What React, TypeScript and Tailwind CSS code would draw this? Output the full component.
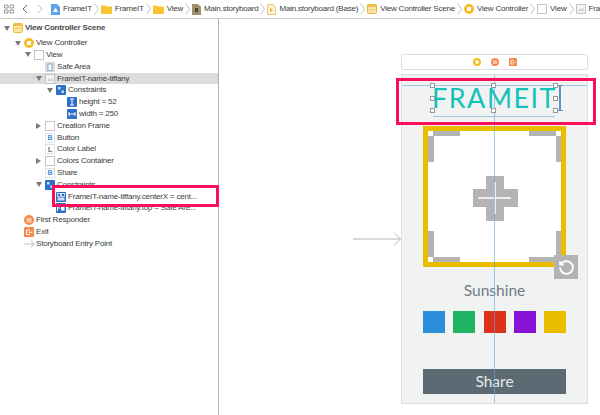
import React from "react";

const Chev = () => (
  <svg width="5" height="12" viewBox="0 0 5 12" className="shrink-0"><path d="M0.5 0.5L4.5 6L0.5 11.5" fill="none" stroke="#b5b5b5" strokeWidth="0.8" /></svg>
);
const Folder = () => (
  <svg width="11" height="9" viewBox="0 0 11 9" className="shrink-0"><path d="M0 1.2Q0 .4 .8 .4H4L5 1.5H10.2Q11 1.5 11 2.2V8.2Q11 9 10.2 9H.8Q0 9 0 8.2Z" fill="#f8c42f" /></svg>
);
const SceneIcon = () => (
  <svg width="10" height="10" viewBox="0 0 10 10" className="shrink-0"><rect x=".5" y=".5" width="9" height="9" rx="1" fill="#fbe6a6" stroke="#eab73a" /><rect x=".5" y=".5" width="9" height="2.5" fill="#f2c04a" /><rect x="2" y="5" width="6" height="1" fill="#f3ca6b" /></svg>
);
const VCIcon = ({ s = 10 }: { s?: number }) => (
  <svg width={s} height={s} viewBox="0 0 10 10" className="shrink-0"><circle cx="5" cy="5" r="5" fill="#f8bb24" /><rect x="3" y="3" width="4" height="4" fill="#fff" /></svg>
);
const ViewIcon = () => (
  <svg width="10" height="10" viewBox="0 0 10 10" className="shrink-0"><rect x=".5" y=".5" width="9" height="9" fill="#fff" stroke="#c4c4c4" /></svg>
);
const ImgIcon = () => (
  <svg width="10" height="10" viewBox="0 0 10 10" className="shrink-0"><rect x=".5" y=".5" width="9" height="9" fill="#f3f3f3" stroke="#c4c4c4" /><path d="M2 7L4 4.5L5.5 6L7 3.5L8 7Z" fill="#cfcfcf" /></svg>
);
const SafeIcon = () => (
  <svg width="10" height="10" viewBox="0 0 10 10" className="shrink-0"><rect width="10" height="10" fill="#d8dbde" /><rect x="3" y="2" width="4" height="6.5" fill="#fff" stroke="#5b93cf" strokeWidth=".7" /></svg>
);
const LetterIcon = ({ c, color }: { c: string; color: string }) => (
  <span className="flex h-[10px] w-[10px] shrink-0 items-center justify-center border border-[#e2e2e2] bg-white text-[7px] font-bold leading-none" style={{ color }}>{c}</span>
);
const Constraint = ({ kind }: { kind: "group" | "h" | "w" | "cx" | "top" }) => (
  <svg width="10" height="10" viewBox="0 0 10 10" className="shrink-0">
    <rect width="10" height="10" rx="1" fill="#2d6fc9" />
    {kind === "group" && <><rect x="2" y="2" width="2.5" height="2.5" fill="#cfe0f6" /><rect x="5.5" y="5.5" width="2.5" height="2.5" fill="#cfe0f6" /></>}
    {kind === "h" && <path d="M3 2H7M5 2V8M3 8H7" stroke="#fff" strokeWidth="1" fill="none" />}
    {kind === "w" && <path d="M2 3V7M2 5H8M8 3V7" stroke="#fff" strokeWidth="1" fill="none" />}
    {kind === "cx" && <><rect x="1.5" y="1.5" width="3" height="3" fill="none" stroke="#fff" strokeWidth=".7" /><rect x="5.5" y="1.5" width="3" height="3" fill="none" stroke="#fff" strokeWidth=".7" /><rect x="1.5" y="5.5" width="7" height="3" fill="#cfe0f6" /></>}
    {kind === "top" && <><path d="M1.5 2V8M1.5 5H4" stroke="#fff" strokeWidth="1" /><rect x="5" y="2.5" width="3.5" height="5" fill="#fff" /></>}
  </svg>
);
const Responder = ({ s = 10 }: { s?: number }) => (
  <svg width={s} height={s} viewBox="0 0 10 10" className="shrink-0"><circle cx="5" cy="5" r="5" fill="#f58a4b" /><rect x="2.5" y="3" width="5" height="4.5" fill="#fbc7a6" /></svg>
);
const ExitIcon = ({ s = 10 }: { s?: number }) => (
  <svg width={s} height={s} viewBox="0 0 10 10" className="shrink-0"><rect width="10" height="10" rx="1" fill="#f58a4b" /><path d="M6 3H2.5V7.5H6M4.5 5.2H8.5" stroke="#fff" strokeWidth="1" fill="none" /></svg>
);
const EntryIcon = () => (
  <svg width="11" height="8" viewBox="0 0 11 8" className="shrink-0"><path d="M0 4H10M7 .8L10.4 4L7 7.2" stroke="#b0b0b0" strokeWidth=".8" fill="none" /></svg>
);

type Row = { pad: string; tri?: "d" | "r"; icon: React.ReactNode; label: string; selected?: boolean; bold?: boolean };
const rows: Row[] = [
  { pad: "pl-[4px] mb-[3px]", tri: "d", icon: <SceneIcon />, label: "View Controller Scene", bold: true },
  { pad: "pl-[15px]", tri: "d", icon: <VCIcon />, label: "View Controller" },
  { pad: "pl-[25px]", tri: "d", icon: <ViewIcon />, label: "View" },
  { pad: "pl-[36px]", icon: <SafeIcon />, label: "Safe Area" },
  { pad: "pl-[36px]", tri: "d", icon: <ImgIcon />, label: "FrameIT-name-tiffany", selected: true },
  { pad: "pl-[47px]", tri: "d", icon: <Constraint kind="group" />, label: "Constraints" },
  { pad: "pl-[58px]", icon: <Constraint kind="h" />, label: "height = 52" },
  { pad: "pl-[58px]", icon: <Constraint kind="w" />, label: "width = 250" },
  { pad: "pl-[36px]", tri: "r", icon: <ViewIcon />, label: "Creation Frame" },
  { pad: "pl-[36px]", icon: <LetterIcon c="B" color="#4a90d9" />, label: "Button" },
  { pad: "pl-[36px]", icon: <LetterIcon c="L" color="#666666" />, label: "Color Label" },
  { pad: "pl-[36px]", tri: "r", icon: <ViewIcon />, label: "Colors Container" },
  { pad: "pl-[36px]", icon: <LetterIcon c="B" color="#4a90d9" />, label: "Share" },
  { pad: "pl-[36px]", tri: "d", icon: <Constraint kind="group" />, label: "Constraints" },
  { pad: "pl-[47px]", icon: <Constraint kind="cx" />, label: "FrameIT-name-tiffany.centerX = cent..." },
  { pad: "pl-[47px]", icon: <Constraint kind="top" />, label: "FrameIT-name-tiffany.top = Safe Are..." },
  { pad: "pl-[15px]", icon: <Responder />, label: "First Responder" },
  { pad: "pl-[15px]", icon: <ExitIcon />, label: "Exit" },
  { pad: "pl-[15px]", icon: <EntryIcon />, label: "Storyboard Entry Point" },
];

const Tri = ({ dir }: { dir?: "d" | "r" }) => (
  <span className="flex w-[9px] shrink-0 items-center">
    {dir === "d" && <svg width="6" height="5" viewBox="0 0 6 5"><path d="M0 0H6L3 5Z" fill="#7a7a7a" /></svg>}
    {dir === "r" && <svg width="5" height="6" viewBox="0 0 5 6"><path d="M0 0V6L5 3Z" fill="#7a7a7a" /></svg>}
  </span>
);

const Crumb = ({ icon, text }: { icon: React.ReactNode; text: string }) => (
  <span className="flex shrink-0 items-center gap-[3px]">{icon}<span>{text}</span></span>
);

const Handle = ({ cls }: { cls: string }) => (
  <span className={`absolute h-[5px] w-[5px] border border-[#9a9a9a] bg-white ${cls}`} />
);
const Mark = ({ cls }: { cls: string }) => <span className={`absolute bg-[#b3b3b3] ${cls}`} />;

const swatches = ["bg-[#2b90d9]", "bg-[#1fb462]", "bg-[#dc321b]", "bg-[#8613d6]", "bg-[#ebbd00]"];

export default function App() {
  return (
    <div className="flex h-[415px] w-[600px] flex-col overflow-hidden bg-white font-['Liberation_Sans',sans-serif] text-[8px] text-[#3c3c3c]">
      <header className="flex h-[19px] shrink-0 items-center gap-[2px] overflow-hidden whitespace-nowrap border-b border-[#c9c9c9] pl-[4px] tracking-[-0.2px]">
        <svg width="10" height="10" viewBox="0 0 10 10" className="mr-[6px] shrink-0"><path d="M.5 1H4V4H.5ZM6 1H9.5V4H6ZM.5 6H4V9H.5ZM6 6H9.5V9H6Z" fill="none" stroke="#808080" strokeWidth=".8" /></svg>
        <svg width="6" height="10" viewBox="0 0 6 10" className="mr-[7px] shrink-0"><path d="M5 1L1 5L5 9" fill="none" stroke="#666" strokeWidth="1" /></svg>
        <svg width="6" height="10" viewBox="0 0 6 10" className="mr-[6px] shrink-0"><path d="M1 1L5 5L1 9" fill="none" stroke="#bbb" strokeWidth="1" /></svg>
        <Crumb icon={<svg width="9" height="11" viewBox="0 0 9 11"><path d="M0 0H6L9 3V11H0Z" fill="#5aa5e8" /><path d="M2 8L4.5 3.5L7 8Z" fill="#fff" /></svg>} text="FrameIT" />
        <Chev />
        <Crumb icon={<Folder />} text="FrameIT" />
        <Chev />
        <Crumb icon={<Folder />} text="View" />
        <Chev />
        <Crumb icon={<svg width="9" height="11" viewBox="0 0 9 11"><path d="M0 0H6L9 3V11H0Z" fill="#a08f6c" /><rect x="3" y="4" width="3" height="4" fill="#4b4536" /></svg>} text="Main.storyboard" />
        <Chev />
        <Crumb icon={<svg width="9" height="11" viewBox="0 0 9 11"><path d="M.5.5H6L8.5 3V10.5H.5Z" fill="#fdf3d4" stroke="#e6c878" /><path d="M3 4V8L6 6Z" fill="#e8a93a" /></svg>} text="Main.storyboard (Base)" />
        <Chev />
        <Crumb icon={<SceneIcon />} text="View Controller Scene" />
        <Chev />
        <Crumb icon={<VCIcon />} text="View Controller" />
        <Chev />
        <Crumb icon={<ViewIcon />} text="View" />
        <Chev />
        <Crumb icon={<ImgIcon />} text="FrameIT-name-tiffany" />
      </header>

      <div className="flex min-h-0 flex-1">
        <aside className="relative w-[219px] shrink-0 border-r border-[#b5b5b5] pt-[3.5px] tracking-[-0.2px]">
          {rows.map((r, i) => (
            <div key={i} className={`flex h-[11.8px] items-center whitespace-nowrap ${r.pad} ${r.selected ? "bg-[#dcdcdc]" : ""}`}>
              <Tri dir={r.tri} />
              <span className="flex w-[12px] shrink-0 items-center">{r.icon}</span>
              <span className={r.bold ? "font-bold text-[#4a4a4a]" : ""}>{r.label}</span>
            </div>
          ))}
          <div className="absolute left-[52px] top-[166px] h-[22px] w-[167px] border-[3px] border-[#fb0f5a]" />
        </aside>

        <main className="relative flex-1 pl-[182px] pt-[35px]">
          <div className="flex h-[16px] w-[187px] items-center justify-center gap-[10px] rounded-[2px] border border-[#dedede]">
            <VCIcon s={8} />
            <Responder s={8} />
            <ExitIcon s={8} />
          </div>
          <div className="mt-[4px] flex h-[330px] w-[187px] flex-col items-center border border-[#dcdedf] bg-[#f1f3f3]">
            <div className="flex h-[51px] w-full items-center justify-center pb-[7px] font-['Lato',sans-serif] text-[27px] font-normal leading-none tracking-[1.5px] text-[#14c2b8]">FRAMEIT</div>
            <div className="relative h-[141px] w-[143px] shrink-0 border-[5px] border-[#ebbd00] bg-white">
              <Mark cls="left-[5px] top-0 h-[5px] w-[27px]" />
              <Mark cls="right-[5px] top-0 h-[5px] w-[27px]" />
              <Mark cls="left-0 top-[5px] h-[26px] w-[6px]" />
              <Mark cls="right-0 top-[5px] h-[26px] w-[5px]" />
              <Mark cls="left-0 bottom-[5px] h-[26px] w-[6px]" />
              <Mark cls="right-0 bottom-[5px] h-[26px] w-[5px]" />
              <Mark cls="left-[5px] bottom-0 h-[5px] w-[27px]" />
              <Mark cls="right-[5px] bottom-0 h-[5px] w-[27px]" />
              <svg width="45" height="45" viewBox="0 0 45 45" className="absolute left-[45px] top-[45px]">
                <path d="M13 0H31V13H45V31H31V45H13V31H0V13H13Z" fill="#b3b3b3" />
                <path d="M22 6V38M5 22H38" stroke="#fff" strokeWidth="1.5" />
              </svg>
              <span className="absolute right-[-17px] bottom-[-17px] flex h-[24px] w-[24px] items-center justify-center bg-[#b3b3b3]">
                <svg width="17" height="17" viewBox="0 0 24 24" fill="none" stroke="#fff" strokeWidth="2.6"><path d="M3 12a9 9 0 1 0 9-9 9.75 9.75 0 0 0-6.74 2.74L3 8" /><path d="M3 3v5h5" /></svg>
              </span>
            </div>
            <div className="mt-[13px] font-['Lato',sans-serif] text-[15.5px] leading-[20px] text-[#6d7c86]">Sunshine</div>
            <div className="mt-[11px] flex w-[143px] justify-between">
              {swatches.map((c) => <span key={c} className={`h-[22px] w-[22px] ${c}`} />)}
            </div>
            <div className="mt-[36px] flex h-[25px] w-[143px] items-center justify-center bg-[#5c6b73] font-['Lato',sans-serif] text-[15.5px] text-[#e6e9ea]">Share</div>
          </div>

          {/* editor overlays */}
          <svg width="50" height="16" viewBox="0 0 50 16" className="absolute left-[134px] top-[212px]"><path d="M0 8H47M41 1.5L47.5 8L41 14.5" stroke="#b3b3b3" strokeWidth="1" fill="none" /></svg>
          <span className="absolute left-[274.5px] top-[56px] h-[328px] w-[1.5px] bg-[#6aa5d8]/60" />
          <span className="absolute left-[183px] top-[66px] h-px w-[185px] bg-[#6aa5d8]/60" />
          <span className="absolute left-[214px] top-[97px] h-px w-[122px] bg-[#6aa5d8]/60" />
          <span className="absolute left-[340px] top-[66px] h-[25px] w-[1.5px] bg-[#5b93cf]" />
          <span className="absolute left-[337px] top-[66px] h-px w-[7px] bg-[#5b93cf]" />
          <span className="absolute left-[337px] top-[91px] h-px w-[7px] bg-[#5b93cf]" />
          <Handle cls="left-[211px] top-[64px]" />
          <Handle cls="left-[272px] top-[64px]" />
          <Handle cls="left-[334px] top-[64px]" />
          <Handle cls="left-[211px] top-[77px]" />
          <Handle cls="left-[334px] top-[77px]" />
          <Handle cls="left-[211px] top-[89px]" />
          <Handle cls="left-[272px] top-[89px]" />
          <Handle cls="left-[334px] top-[89px]" />
          <div className="absolute left-[177px] top-[59px] h-[47px] w-[200px] border-[3px] border-[#fb0f5a]" />
        </main>
      </div>
    </div>
  );
}
